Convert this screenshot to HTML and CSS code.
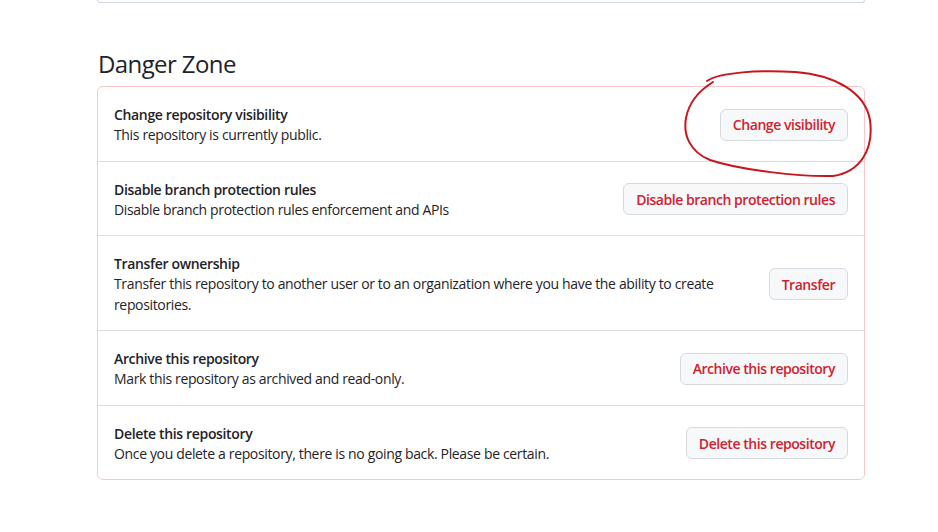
FILE: index.html
```html
<!DOCTYPE html>
<html lang="en">
<head>
<meta charset="utf-8">
<title>Danger Zone</title>
<link rel="stylesheet" href="styles.css">
</head>
<body>
<div class="page">
  <div class="prev-box"></div>
  <h2 class="zone-title">Danger Zone</h2>
  <div class="danger-box">
    <div class="row">
      <div class="row-text">
        <div class="row-title">Change repository visibility</div>
        <div class="row-desc">This repository is currently public.</div>
      </div>
      <button class="btn-danger">Change visibility</button>
    </div>
    <div class="row">
      <div class="row-text">
        <div class="row-title">Disable branch protection rules</div>
        <div class="row-desc">Disable branch protection rules enforcement and APIs</div>
      </div>
      <button class="btn-danger">Disable branch protection rules</button>
    </div>
    <div class="row">
      <div class="row-text">
        <div class="row-title">Transfer ownership</div>
        <div class="row-desc">Transfer this repository to another user or to an organization where you have the ability to create repositories.</div>
      </div>
      <button class="btn-danger">Transfer</button>
    </div>
    <div class="row">
      <div class="row-text">
        <div class="row-title">Archive this repository</div>
        <div class="row-desc">Mark this repository as archived and read-only.</div>
      </div>
      <button class="btn-danger">Archive this repository</button>
    </div>
    <div class="row">
      <div class="row-text">
        <div class="row-title">Delete this repository</div>
        <div class="row-desc">Once you delete a repository, there is no going back. Please be certain.</div>
      </div>
      <button class="btn-danger">Delete this repository</button>
    </div>
  </div>
</div>
<svg class="scribble" width="938" height="532" viewBox="0 0 938 532" aria-hidden="true">
  <path d="M707 81 C720 72, 760 70, 795 72 C835 75, 865 92, 870 120 C874 150, 860 172, 833 176 C800 177, 740 170, 710 160 C690 152, 683 135, 686 118 C689 102, 700 90, 713 82" fill="none" stroke="#c8171c" stroke-width="2" stroke-linecap="round"/>
</svg>
</body>
</html>
```
FILE: styles.css
```css
html, body {
  margin: 0;
  padding: 0;
  background: #ffffff;
}
body {
  font-family: "Open Sans", "Noto Sans", sans-serif;
  color: #1f2328;
  font-size: 14px;
  line-height: 21px;
}
.page {
  width: 768px;
  margin-left: 97px;
}
.prev-box {
  height: 2px;
  border: 1px solid #d0d7de;
  border-top: 0;
  border-radius: 0 0 6px 6px;
}
.zone-title {
  margin: 43px 0 4px 1px;
  font-size: 24px;
  line-height: 36px;
  font-weight: 400;
  letter-spacing: -0.6px;
}
.danger-box {
  border: 1px solid #f6c8cb;
  border-radius: 6px;
}
.row {
  display: flex;
  align-items: center;
  gap: 16px;
  padding: 17px 16px 15px;
  border-top: 1px solid #d8dee4;
}
.row:first-child {
  border-top: 0;
}
.row-text {
  flex: 1;
  letter-spacing: -0.35px;
}
.row-title {
  font-weight: 600;
}
.row-desc {
  line-height: 20.5px;
}
.btn-danger {
  flex: none;
  height: 32px;
  padding: 0 12px;
  font-family: inherit;
  font-size: 14px;
  font-weight: 600;
  letter-spacing: -0.45px;
  color: #cf222e;
  background: #f6f8fa;
  border: 1px solid #d5dadf;
  border-radius: 6px;
}
.scribble {
  position: absolute;
  left: 0;
  top: 0;
  pointer-events: none;
}
```
